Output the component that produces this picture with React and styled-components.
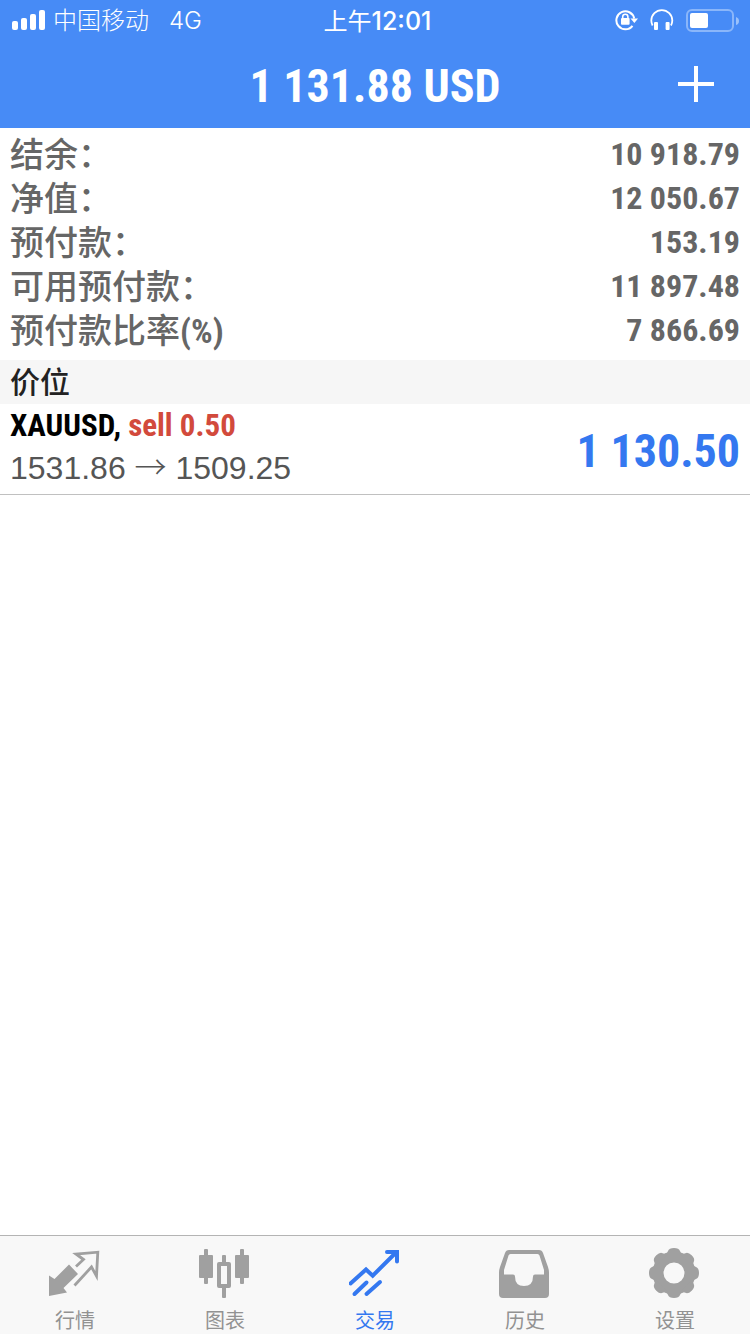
import React from "react";
import styled, { createGlobalStyle } from "styled-components";

const condensed = '"Roboto Condensed", "Noto Sans CJK SC", sans-serif';
const regular = '"Liberation Sans", "Noto Sans CJK SC", sans-serif';
const system = '"Inter", "Noto Sans CJK SC", sans-serif';

const GlobalStyle = createGlobalStyle`
  *, *::before, *::after { box-sizing: border-box; }
  body { margin: 0; background: #fff; font-family: ${regular}; }
`;

const Screen = styled.div`
  display: flex;
  flex-direction: column;
  min-height: 100vh;
`;

const TopArea = styled.header`
  background: #478bf6;
  color: #fff;
`;

const StatusBar = styled.div`
  display: grid;
  grid-template-columns: 1fr auto 1fr;
  align-items: center;
  height: 40px;
  padding: 0 11px 0 12px;
  font-family: ${system};
  font-size: 24px;
  line-height: 36px;
`;

const StatusGroup = styled.div`
  display: flex;
  align-items: center;
  justify-content: ${(p) => (p.$end ? "flex-end" : "flex-start")};
  gap: ${(p) => (p.$end ? "12px" : "8px")};
`;

const Network = styled.span`
  padding-top: 2px;
  font-weight: 300;
  margin-right: ${(p) => (p.$spaced ? "12px" : "0")};
`;

const Clock = styled.time`
  padding: 2px 0 0 4px;
  font-weight: 400;
`;

const ClockDigits = styled.span`
  font-size: 25px;
  font-weight: 500;
`;

const TitleBar = styled.div`
  display: grid;
  grid-template-columns: 1fr auto 1fr;
  align-items: center;
  height: 88px;
  padding: 0 36px;
`;

const Title = styled.h1`
  grid-column: 2;
  margin: 0;
  padding-top: 4px;
  font: 700 46px/80px ${condensed};
`;

const AddButton = styled.button`
  display: flex;
  justify-self: end;
  padding: 0;
  border: 0;
  background: none;
  color: inherit;
`;

const Main = styled.main`
  flex: 1;
`;

const Summary = styled.dl`
  margin: 0;
  padding: 4px 10px 8px;
  color: #666;
  font: 700 32px/44px ${condensed};
`;

const SummaryRow = styled.div`
  display: flex;
  justify-content: space-between;
  height: 44px;
`;

const Label = styled.dt`
  font: 500 34px/42px "Noto Sans CJK SC", sans-serif;
`;

const Unit = styled.span`
  font: 700 34px/1 ${condensed};
`;

const Value = styled.dd`
  margin: 0;
`;

const SectionTitle = styled.h2`
  margin: 0;
  padding: 2px 10px 0;
  background: #f6f6f6;
  color: #222;
  font: 500 30px/42px ${regular};
`;

const Position = styled.article`
  display: flex;
  align-items: center;
  justify-content: space-between;
  height: 91px;
  padding: 0 10px;
  border-bottom: 1px solid #c0c0c0;
`;

const Details = styled.div`
  padding-bottom: 4px;
`;

const Symbol = styled.h3`
  margin: 0 0 2px;
  color: #000;
  font: 700 31px/40px ${condensed};
`;

const Side = styled.span`
  color: #d24a3c;
`;

const Prices = styled.p`
  margin: 0;
  color: #555;
  font: 400 32px/40px ${regular};
`;

const Arrow = styled.span`
  font-family: "Noto Sans CJK SC", sans-serif;
  font-weight: 300;
  line-height: 1;
`;

const Profit = styled.strong`
  padding-top: 4px;
  color: #3478f0;
  font: 700 46px/80px ${condensed};
`;

const TabBar = styled.nav`
  display: grid;
  grid-template-columns: repeat(5, 1fr);
  height: 99px;
  border-top: 1px solid #b4b4b4;
  background: #f8f8f8;
`;

const Tab = styled.a`
  display: flex;
  flex-direction: column;
  align-items: center;
  padding-top: 10px;
  color: ${(p) => (p.$active ? "#3478f0" : "#929292")};
  font: 400 20px/28px ${regular};
  text-decoration: none;
  gap: 9px;
`;

const TabIcon = styled.svg`
  display: block;
  width: 52px;
  height: 52px;
  color: ${(p) => (p.$active ? "#3478f0" : "#a0a0a0")};
`;

const SignalIcon = () => (
  <svg width="33" height="20" viewBox="0 0 33 20" fill="currentColor" aria-hidden="true">
    <rect x="0" y="11" width="6" height="9" rx="2" />
    <rect x="9" y="8" width="6" height="12" rx="2" />
    <rect x="18" y="4" width="6" height="16" rx="2" />
    <rect x="27" y="0" width="6" height="20" rx="2" />
  </svg>
);

const RotationLockIcon = () => (
  <svg width="23" height="22" viewBox="0 0 23 22" fill="none" stroke="currentColor" aria-hidden="true">
    <path d="M17.5 16.8A9 9 0 1 1 19.2 9.5" strokeWidth="2" />
    <path d="M15.5 9.5H23L19.4 14Z" fill="currentColor" stroke="none" />
    <path d="M7.7 9.5V7.8a2.6 2.6 0 0 1 5.2 0V9.5" strokeWidth="1.6" />
    <rect x="6" y="9" width="8.6" height="6.8" rx="1" fill="currentColor" stroke="none" />
  </svg>
);

const HeadphonesIcon = () => (
  <svg width="24" height="22" viewBox="0 0 24 22" aria-hidden="true">
    <path d="M2.6 16.5C1.7 14.8 1.3 13.3 1.3 11.6a10.5 10.5 0 0 1 21 0c0 1.7-.4 3.2-1.3 4.9" fill="none" stroke="currentColor" strokeWidth="1.8" />
    <rect x="4" y="13" width="4" height="8" rx="1" fill="currentColor" />
    <rect x="15.6" y="13" width="4" height="8" rx="1" fill="currentColor" />
  </svg>
);

const BatteryIcon = () => (
  <svg width="53" height="24" viewBox="0 0 53 24" aria-hidden="true">
    <rect x="1" y="2" width="46" height="21" rx="5" fill="none" stroke="#8ab6fa" strokeWidth="2" />
    <path d="M50 9q3 1 3 4t-3 4z" fill="#9ac1fb" />
    <rect x="4" y="5" width="18" height="15" rx="2" fill="currentColor" />
  </svg>
);

const PlusIcon = () => (
  <svg width="36" height="36" viewBox="0 0 36 36" aria-hidden="true">
    <path d="M18 0v36M0 18h36" stroke="currentColor" strokeWidth="4" />
  </svg>
);

const QuotesIcon = () => (
  <>
    <path d="M0 29.5L5.5 33L20 18.5L29 28L14.5 42L18 46.5L0 50Z" fill="currentColor" />
    <path d="M27 20.5L34.5 13.5L27 8L48.8 6.2L47.5 30L42.5 21L25.5 39.5" fill="none" stroke="currentColor" strokeWidth="2.8" />
  </>
);

const ChartIcon = () => (
  <g fill="currentColor">
    <rect x="5" y="3" width="4" height="35" rx="1" />
    <rect x="0" y="9" width="14" height="23" rx="1" />
    <rect x="41" y="3" width="4" height="35" rx="1" />
    <rect x="36" y="9" width="14" height="23" rx="1" />
    <rect x="23" y="9" width="4" height="9" rx="1" />
    <rect x="23" y="40" width="4" height="12" rx="1" />
    <rect x="20" y="18" width="10" height="22" fill="none" stroke="currentColor" strokeWidth="4" strokeLinejoin="round" />
  </g>
);

const TradeIcon = () => (
  <g fill="none" stroke="currentColor" strokeWidth="4">
    <path d="M1.5 37.5L17 23.5L23.7 29.7L47 6.5" strokeLinecap="round" />
    <path d="M38 6H48V15.5" strokeLinecap="round" />
    <path d="M5.5 48L17.5 36.5M17.5 48L31 36" strokeLinecap="round" />
  </g>
);

const HistoryIcon = () => (
  <path
    fill="currentColor"
    fillRule="evenodd"
    d="M10 4H40Q43 4 44 7L49 21Q50 24 50 27V48Q50 52 46 52H4Q0 52 0 48V27Q0 24 1 21L6 7Q7 4 10 4ZM11.5 8Q10 8 9.5 9.5L5 24V28.5H14Q16 28.5 16 30.5Q16 40 25 40Q34 40 34 30.5Q34 28.5 36 28.5H45V24L40.5 9.5Q40 8 38.5 8Z"
  />
);

const SettingsIcon = () => (
  <g transform="translate(25 27)">
    <circle r="16" fill="none" stroke="currentColor" strokeWidth="11" />
    {[0, 45, 90, 135, 180, 225, 270, 315].map((angle) => (
      <path
        key={angle}
        transform={`rotate(${angle})`}
        fill="currentColor"
        d="M-9 -18Q-6.5 -20 -6 -22Q-5 -25 0 -25Q5 -25 6 -22Q6.5 -20 9 -18Z"
      />
    ))}
  </g>
);

const summary = [
  { label: "结余：", value: "10 918.79" },
  { label: "净值：", value: "12 050.67" },
  { label: "预付款：", value: "153.19" },
  { label: "可用预付款：", value: "11 897.48" },
  { label: "预付款比率", unit: "(%)", value: "7 866.69" },
];

const tabs = [
  { id: "quotes", label: "行情", Icon: QuotesIcon },
  { id: "chart", label: "图表", Icon: ChartIcon },
  { id: "trade", label: "交易", Icon: TradeIcon, active: true },
  { id: "history", label: "历史", Icon: HistoryIcon },
  { id: "settings", label: "设置", Icon: SettingsIcon },
];

export default function App() {
  return (
    <Screen>
      <GlobalStyle />
      <TopArea>
        <StatusBar>
          <StatusGroup>
            <SignalIcon />
            <Network $spaced>中国移动</Network>
            <Network>4G</Network>
          </StatusGroup>
          <Clock>
            上午<ClockDigits>12:01</ClockDigits>
          </Clock>
          <StatusGroup $end>
            <RotationLockIcon />
            <HeadphonesIcon />
            <BatteryIcon />
          </StatusGroup>
        </StatusBar>
        <TitleBar>
          <Title>1 131.88 USD</Title>
          <AddButton type="button" aria-label="新订单">
            <PlusIcon />
          </AddButton>
        </TitleBar>
      </TopArea>
      <Main>
        <Summary>
          {summary.map(({ label, unit, value }) => (
            <SummaryRow key={label}>
              <Label>
                {label}
                {unit && <Unit>{unit}</Unit>}
              </Label>
              <Value>{value}</Value>
            </SummaryRow>
          ))}
        </Summary>
        <SectionTitle>价位</SectionTitle>
        <Position>
          <Details>
            <Symbol>
              XAUUSD, <Side>sell 0.50</Side>
            </Symbol>
            <Prices>
              1531.86 <Arrow>→</Arrow> 1509.25
            </Prices>
          </Details>
          <Profit>1 130.50</Profit>
        </Position>
      </Main>
      <TabBar>
        {tabs.map(({ id, label, Icon, active }) => (
          <Tab key={id} href={`#${id}`} $active={active} aria-current={active ? "page" : undefined}>
            <TabIcon viewBox="0 0 52 52" $active={active} aria-hidden="true">
              <Icon />
            </TabIcon>
            {label}
          </Tab>
        ))}
      </TabBar>
    </Screen>
  );
}
